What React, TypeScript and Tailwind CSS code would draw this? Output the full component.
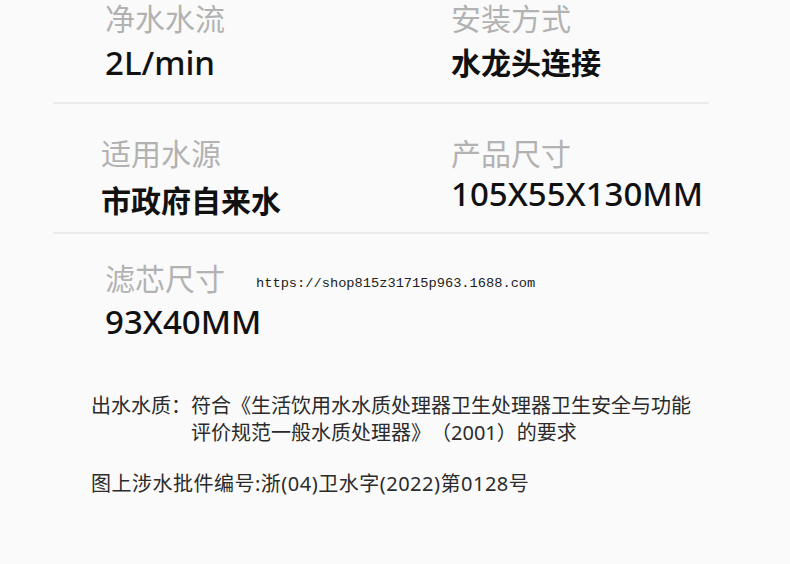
const sans = "font-['Noto_Sans','Noto_Sans_CJK_SC',sans-serif]";

function Label({ children }: { children: React.ReactNode }) {
  return <div className="text-[30px] leading-[30px] text-[#b2b2b2]">{children}</div>;
}

function Divider() {
  return <div className="h-[2px] bg-[#ececec]" />;
}

export default function App() {
  return (
    <div className={`${sans} h-[564px] w-full overflow-hidden bg-[#fafafa] text-[#111] [text-spacing-trim:space-all]`}>
      <div className="ml-[53px] w-[656px]">
        {/* row 1 */}
        <div className="grid h-[102px] grid-cols-[398px_1fr] pt-[4px]">
          <div className="pl-[52px]">
            <Label>净水水流</Label>
            <div className="mt-[12px] text-[33px] font-medium leading-[33px]">2L/min</div>
          </div>
          <div>
            <Label>安装方式</Label>
            <div className="mt-[14px] text-[30px] font-bold leading-[30px]">水龙头连接</div>
          </div>
        </div>
        <Divider />

        {/* row 2 */}
        <div className="grid h-[128px] grid-cols-[398px_1fr] pt-[35px]">
          <div className="pl-[48px]">
            <Label>适用水源</Label>
            <div className="mt-[17px] text-[30px] font-bold leading-[30px]">市政府自来水</div>
          </div>
          <div>
            <Label>产品尺寸</Label>
            <div className="mt-[8px] text-[33px] font-medium leading-[33px]">105X55X130MM</div>
          </div>
        </div>
        <Divider />

        {/* row 3 */}
        <div className="pl-[52px] pt-[30px]">
          <div className="flex items-start gap-[31px]">
            <Label>滤芯尺寸</Label>
            <span className="mt-[10px] font-['Liberation_Mono',monospace] text-[13.7px] leading-[20px] text-[#222]">
              https://shop815z31715p963.1688.com
            </span>
          </div>
          <div className="mt-[11px] text-[33px] font-medium leading-[33px]">93X40MM</div>
        </div>
      </div>

      {/* notes */}
      <div className="ml-[91px] mt-[54px] text-[20px] leading-[27px] text-[#2b2b2b]">
        <div className="flex">
          <span className="shrink-0">出水水质：</span>
          <span className="w-[510px]">
            符合《生活饮用水水质处理器卫生处理器卫生安全与功能评价规范一般水质处理器》（2001）的要求
          </span>
        </div>
        <div className="mt-[24px] tracking-[0.5px]">图上涉水批件编号:浙(04)卫水字(2022)第0128号</div>
      </div>
    </div>
  );
}
